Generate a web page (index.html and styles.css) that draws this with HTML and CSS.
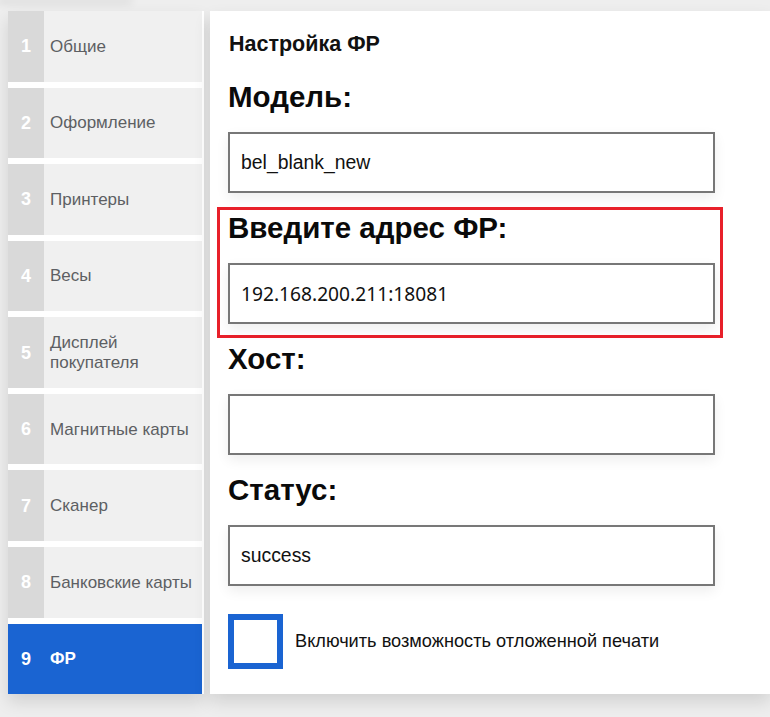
FILE: index.html
```html
<!DOCTYPE html>
<html lang="ru">
<head>
<meta charset="utf-8">
<title>Настройка ФР</title>
<link rel="stylesheet" href="styles.css">
</head>
<body>
<div class="top-shade"></div>
<div class="page">
  <nav class="sidebar">
    <div class="nav-item"><span class="num">1</span><span class="label">Общие</span></div>
    <div class="nav-item"><span class="num">2</span><span class="label">Оформление</span></div>
    <div class="nav-item"><span class="num">3</span><span class="label">Принтеры</span></div>
    <div class="nav-item"><span class="num">4</span><span class="label">Весы</span></div>
    <div class="nav-item"><span class="num">5</span><span class="label">Дисплей покупателя</span></div>
    <div class="nav-item"><span class="num">6</span><span class="label">Магнитные карты</span></div>
    <div class="nav-item"><span class="num">7</span><span class="label">Сканер</span></div>
    <div class="nav-item"><span class="num">8</span><span class="label">Банковские карты</span></div>
    <div class="nav-item active"><span class="num">9</span><span class="label">ФР</span></div>
  </nav>
  <main class="panel">
    <h1 class="title">Настройка ФР</h1>
    <div class="field">
      <h2 class="field-label">Модель:</h2>
      <div class="input">bel_blank_new</div>
    </div>
    <div class="field highlight">
      <h2 class="field-label">Введите адрес ФР:</h2>
      <div class="input mono">192.168.200.211:18081</div>
    </div>
    <div class="field">
      <h2 class="field-label">Хост:</h2>
      <div class="input"></div>
    </div>
    <div class="field">
      <h2 class="field-label">Статус:</h2>
      <div class="input">success</div>
    </div>
    <label class="check-row">
      <span class="checkbox"></span>
      <span class="check-text">Включить возможность отложенной печати</span>
    </label>
  </main>
</div>
</body>
</html>
```

FILE: styles.css
```css
html, body {
  margin: 0;
  padding: 0;
  background: #eeeeee;
  overflow: hidden;
}

body {
  font-family: "Liberation Sans", Arial, sans-serif;
  width: 770px;
  height: 717px;
}

.top-shade {
  width: 130px;
  height: 0;
  box-shadow: 0 1px 8px 2px rgba(0, 0, 0, 0.12);
}

.page {
  display: flex;
  align-items: stretch;
  gap: 6px;
  padding: 11px 0 0 8px;
}

.sidebar {
  width: 194px;
  padding-right: 2px;
  background: #ffffff;
  display: flex;
  flex-direction: column;
  gap: 6px;
  box-shadow: 0 8px 16px rgba(0, 0, 0, 0.12);
}

.nav-item {
  flex: 1;
  display: flex;
  background: #f0f0f0;
}

.nav-item .num {
  width: 36px;
  flex: none;
  background: #d9d9d9;
  color: #ffffff;
  font-weight: bold;
  font-size: 18px;
  padding-top: 1px;
  display: flex;
  align-items: center;
  justify-content: center;
}

.nav-item .label {
  display: flex;
  align-items: center;
  padding: 1px 4px 0 6px;
  font-size: 17px;
  line-height: 20px;
  color: #5d5f63;
}

.nav-item.active {
  background: #1a64d2;
}

.nav-item.active .num {
  background: #1a64d2;
}

.nav-item.active .label {
  color: #ffffff;
  font-weight: bold;
}

.panel {
  flex: 1;
  background: #ffffff;
  padding: 21px 0 25px 7px;
  box-shadow: 0 8px 16px rgba(0, 0, 0, 0.12);
}

.title {
  margin: 0 0 20px 12px;
  font-size: 21.5px;
  line-height: 24px;
  font-weight: bold;
  color: #111111;
}

.field {
  width: 506px;
  box-sizing: border-box;
  border: 3px solid transparent;
  padding: 2px 5px 11px 8px;
}

.field.highlight {
  border-color: #e8202a;
}

.field-label {
  margin: 0 0 19px 0;
  font-size: 29.5px;
  line-height: 32px;
  font-weight: bold;
  color: #0a0a0a;
}

.input {
  height: 61px;
  box-sizing: border-box;
  border: 2px solid #777777;
  padding: 0 11px;
  display: flex;
  align-items: center;
  font-size: 19.4px;
  color: #111111;
  background: #ffffff;
  box-shadow: 0 5px 12px rgba(0, 0, 0, 0.07);
}

.input.mono {
  font-family: "Noto Sans", sans-serif;
  font-size: 19.2px;
}

.check-row {
  display: flex;
  align-items: center;
  gap: 12px;
  margin: 14px 0 0 11px;
}

.checkbox {
  width: 55px;
  height: 55px;
  box-sizing: border-box;
  border: 6px solid #1a64d2;
  background: #ffffff;
}

.check-text {
  font-size: 18.2px;
  color: #111111;
}
```
